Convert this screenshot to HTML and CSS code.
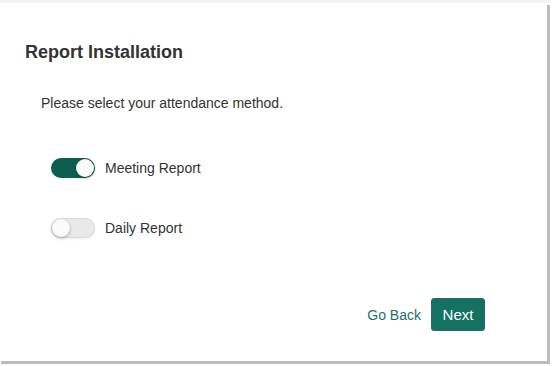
FILE: index.html
```html
<!DOCTYPE html>
<html lang="en">
<head>
    <meta charset="UTF-8">
    <meta name="viewport" content="width=device-width, initial-scale=1.0">
    <title>Report Installation</title>
    <link rel="stylesheet" href="styles.css">
</head>
<body>
    <div class="frame">
        <div class="card">
            <h2 class="title">Report Installation</h2>
            <p class="intro">Please select your attendance method.</p>
            <div class="options">
                <label class="option">
                    <span class="switch on"><span class="knob"></span></span>
                    <span class="label">Meeting Report</span>
                </label>
                <label class="option">
                    <span class="switch"><span class="knob"></span></span>
                    <span class="label">Daily Report</span>
                </label>
            </div>
            <div class="actions">
                <a class="back" href="#">Go Back</a>
                <button class="next">Next</button>
            </div>
        </div>
    </div>
</body>
</html>
```

FILE: styles.css
```css
html, body{
    height: 100%;
}
body{
    margin: 0;
    background: #fff;
    font-family: "Liberation Sans", Arial, sans-serif;
    color: #333;
}
/* gray strip on top, hard gray edge right and bottom */
.frame{
    width: 550px;
    box-sizing: border-box;
    border-top: 3px solid #f2f2f2;
    padding: 0 3px 3px 0;
    background: linear-gradient(#bcbcbc, #bcbcbc) right 0 top 2px / 3px 100% no-repeat,
                linear-gradient(#bcbcbc, #bcbcbc) left 1px bottom 0 / 100% 3px no-repeat;
}
.card{
    height: 358px;
    box-sizing: border-box;
    background: #fff;
    border-top-right-radius: 6px;
    padding: 38px 25px 0;
    display: flex;
    flex-direction: column;
}
.title{
    margin: 0;
    font-size: 18px;
    line-height: 22px;
    font-weight: bold;
    color: #333;
}
.intro{
    margin: 32px 0 0 16px;
    font-size: 14px;
    line-height: 16px;
}
.options{
    margin: 47px 0 0 26px;
    display: flex;
    flex-direction: column;
    gap: 40px;
}
.option{
    display: flex;
    align-items: center;
    gap: 10px;
    font-size: 14px;
}
.switch{
    position: relative;
    width: 44px;
    height: 20px;
    border-radius: 10px;
    background: #e9e9ea;
    box-shadow: inset 0 0 0 1px #dcdcdc, 0 1px 3px rgba(0,0,0,.08);
}
.switch.on{
    background: #0d5e4f;
    box-shadow: 0 1px 3px rgba(0,0,0,.08);
}
.knob{
    position: absolute;
    top: 1px;
    left: 1px;
    width: 18px;
    height: 18px;
    border-radius: 50%;
    background: #fafafa;
    box-shadow: 0 1px 3px rgba(0,0,0,.3);
}
.switch.on .knob{
    left: 25px;
}
.actions{
    margin: 60px 37px 0 0;
    display: flex;
    justify-content: flex-end;
    align-items: center;
    gap: 10px;
}
.back{
    color: #1c7268;
    text-decoration: none;
    font-size: 14px;
}
.next{
    width: 54px;
    height: 33px;
    border: 1px solid #2d5f87;
    border-radius: 3px;
    background: #137262;
    color: #fff;
    font: 15px "Liberation Sans", Arial, sans-serif;
    padding: 0;
}
```
